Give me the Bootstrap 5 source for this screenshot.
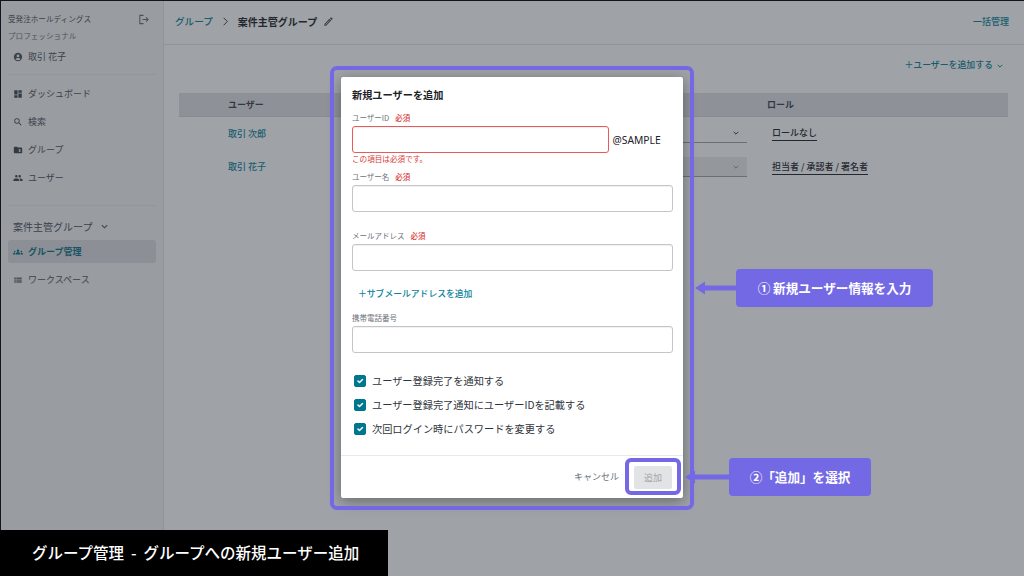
<!DOCTYPE html>
<html lang="ja">
<head>
<meta charset="utf-8">
<title>グループ管理</title>
<link href="https://cdn.jsdelivr.net/npm/bootstrap@5.3.0/dist/css/bootstrap.min.css" rel="stylesheet">
<style>
html,body{margin:0;width:1024px;height:576px;overflow:hidden}
body{position:relative;font-family:"Noto Sans CJK JP","Noto Sans",sans-serif;font-size:9px;color:#21262c;background:#fff}
svg{display:block;flex:none;fill:currentColor}
.app-frame{width:1024px;height:576px;border-top:1px solid #000;border-left:1px solid #000;display:flex}
.side-pane{width:163px;flex:none;height:100%;background:#f4f4f6;border-right:1px solid #e4e5e8;padding:0 7px;box-sizing:border-box}
.brand-row{padding-top:12px;height:24px;line-height:12px;font-size:7.6px;color:#4a4f57}
.brand-row svg{margin-right:7px;color:#646a72}
.plan-row{height:12px;line-height:12px;margin-top:5px;font-size:7.6px;color:#6e737b}
.me-row{height:16px;margin-top:7px;padding-left:5px;gap:5px;color:#4a5058}
.side-rule{border-top:1px solid #e9eaec;margin:0;opacity:1}
.rule-a{margin-top:9px;margin-bottom:5px}
.rule-b{margin-top:13px}
.side-item{height:28px;padding:0 0 0 5px;gap:5px;color:#4a5058;font-size:9px}
.side-item svg{color:#3d434b}
.side-item.is-on{height:23px;background:#dcdde1;border-radius:3px;font-weight:700;color:#086f85;margin-bottom:3px}
.side-item.is-on svg{color:#086f85}
.side-item svg.soft-icon{color:#6a6f76}
.group-title{height:20px;margin:10px 0 4px;padding-left:5px;gap:8px;font-size:10px;color:#4a5058}
.work-pane{flex:1;min-width:0}
.top-bar{height:41px;border-bottom:1px solid #e4e5e8;padding:0 15px 2px 11px;box-sizing:content-box}
.crumb-link{color:#0a8299;font-size:9.6px;font-weight:500}
.crumb-now{font-size:10px;font-weight:700;color:#1d2228}
.pencil-icon{margin-left:6px;color:#3d434b}
.bulk-link{color:#0a8299;font-weight:500;font-size:9px}
.add-row{height:48px;padding:0 20px 8px 0;color:#0a8299;font-size:8.9px;font-weight:500;gap:3px}
.add-row svg{margin-top:1px}
.user-table{margin:0 0 0 15px;width:829px;table-layout:fixed;font-size:9px;border-collapse:collapse;--bs-table-bg:transparent}
.user-table th{height:23px;padding:0;background:#e1e2e6;border-bottom:1px solid #d2d4d9;font-weight:700;color:#3a4048;vertical-align:middle}
.user-table td{padding:0;border:0;vertical-align:middle;height:34px}
.user-table .name-cell{padding-left:49px;color:#0a8299;font-weight:500}
.user-table .role-cell{padding-left:5px;font-weight:500;color:#1d2228}
.head-first{padding-left:49px!important}
.role-mark{border-bottom:1px solid #1d2228;padding-bottom:1px;display:inline-block;line-height:12px}
.pick-box{height:20px;border-bottom:1px solid #9ea2a8;margin-right:20px;padding:0 7px;color:#30353c}
.pick-box.is-off{background:#eceded;color:#8a8e94}
.dim-layer{position:absolute;inset:0;background:rgba(42,48,57,.45)}
.pop-box{position:absolute;left:341px;top:77px;width:342px;height:421px;padding:0;border:0;border-radius:2px;background:#fff;box-shadow:0 3px 14px rgba(0,0,0,.35)}
.pop-body{padding:11px 10.500px 0 11px;flex:1}
.pop-title{height:14px;line-height:14px;font-size:10.200px;font-weight:700;color:#1d2228}
.field-label{height:10px;line-height:10px;font-size:7.5px;color:#6c7178;margin:0;display:flex;gap:6px}
.field-label b{font-weight:500;color:#d93a3a}
.gap-11{margin-top:11px}.gap-8{margin-top:8px}.gap-19{margin-top:19px}.gap-12{margin-top:12px}
.text-box.form-control{height:27px;min-height:0;margin-top:3px;padding:0 8px;border:1px solid #c3c5c9;border-radius:3px;font-size:10px;box-shadow:inset 0 1px 1px rgba(0,0,0,.06)}
.text-box.form-control.is-invalid{border-color:#e75b5b;background-image:none;padding:0 8px}
.id-row{gap:5px}
.id-row .text-box{width:256.500px;flex:none}
.id-suffix{font-size:10.300px;color:#1d2228;margin-top:5px;font-family:"Noto Sans",sans-serif;margin-left:-1px}
.err-line{height:10px;line-height:10px;margin-top:1px;font-size:7.6px;color:#d93a3a}
.sub-link{height:14px;line-height:14px;margin-top:16px;padding-left:6px;font-size:8.8px;font-weight:500;color:#0a8299}
.tick-list{margin-top:21px;padding-left:2px}
.tick-row.form-check{height:14px;min-height:0;margin:0 0 10px;padding:0;display:flex;align-items:center;gap:6px}
.tick-row .form-check-input{float:none;margin:0;width:12px;height:12px;border-radius:2px;background-color:#00768f;border-color:#00768f;opacity:1}
.tick-row .form-check-label{font-size:10.200px;line-height:14px;color:#30353c;opacity:1}
.pop-foot.modal-footer{height:43px;padding:0 11px 0 0;border-top:1px solid #e7e8ea;gap:15px;flex:none;flex-wrap:nowrap}
.pop-foot.modal-footer>*{margin:0}
.cancel-btn{font-size:9px;color:#6c7178}
.add-btn.btn{width:38px;height:23px;padding:0;font-size:9px;line-height:23px;border:0;border-radius:2px;background:#e2e3e5;color:#a3a6ab;opacity:1}
.mark-frame{position:absolute;border:4px solid #7568e6;background:transparent}
.frame-big{left:330px;top:66px;width:364px;height:444px;border-radius:7px}
.frame-small{left:625px;top:458px;width:56px;height:37px;border-radius:6px}
.note-group{position:absolute;display:flex;align-items:center;color:#7568e6}
.note-one{left:695px;top:269px}
.note-two{left:685px;top:458px}
.note-box{height:38px;border-radius:4px;background:#7469e4;color:#fff;font-size:12.600px;font-weight:700;display:flex;align-items:center;justify-content:center}
.note-one .note-box{width:197px}
.note-two .note-box{width:142px}
.caption-bar{position:absolute;left:0;top:530px;width:388px;height:46px;background:#000;color:#fff;font-size:15.500px;font-weight:500;padding-left:32px;display:flex;align-items:center;white-space:pre}
</style>
</head>
<body>
<svg width="0" height="0" style="position:absolute">
  <symbol id="i-user" viewBox="0 0 24 24"><path d="M12 2a10 10 0 1 0 0 20 10 10 0 0 0 0-20zm0 4a3.4 3.4 0 1 1 0 6.8A3.4 3.4 0 0 1 12 6zm0 14a7.9 7.9 0 0 1-6.2-3c.6-1.9 4.2-2.8 6.2-2.8s5.600.9 6.200 2.800A7.900 7.900 0 0 1 12 20z"/></symbol>
  <symbol id="i-dash" viewBox="0 0 24 24"><path d="M3 13h8V3H3v10zm0 8h8v-6H3v6zm10 0h8V11h-8v10zm0-18v6h8V3h-8z"/></symbol>
  <symbol id="i-search" viewBox="0 0 24 24"><path d="M15.500 14h-.79l-.28-.27A6.471 6.471 0 0 0 16 9.500 6.500 6.500 0 1 0 9.500 16c1.610 0 3.090-.59 4.230-1.570l.27.28v.79l5 4.990L20.490 19l-4.990-5zm-6 0C7.010 14 5 11.990 5 9.500S7.010 5 9.500 5 14 7.010 14 9.500 11.990 14 9.500 14z"/></symbol>
  <symbol id="i-folder" viewBox="0 0 24 24"><path fill-rule="evenodd" d="M10 4H4a2 2 0 0 0-2 2v12c0 1.100.9 2 2 2h16a2 2 0 0 0 2-2V8a2 2 0 0 0-2-2h-8l-2-2zm4 6h4v1.800h-2.400v.9H18V17h-4v-1.800h2.400v-.9H14V10z"/></symbol>
  <symbol id="i-people" viewBox="0 0 24 24"><path d="M16 11a3 3 0 1 0 0-6 3 3 0 0 0 0 6zm-8 0a3 3 0 1 0 0-6 3 3 0 0 0 0 6zm0 2c-2.330 0-7 1.170-7 3.500V19h14v-2.500c0-2.330-4.670-3.500-7-3.500zm8 0c-.29 0-.62.02-.97.05 1.160.84 1.970 1.970 1.970 3.450V19h6v-2.500c0-2.330-4.670-3.500-7-3.500z"/></symbol>
  <symbol id="i-groups" viewBox="0 0 24 24"><path d="M12 12.800c1.600 0 3.100.4 4.300.9.900.4 1.700 1.200 1.700 2.300V18H6v-2c0-1.100.7-1.900 1.700-2.300 1.200-.5 2.700-.9 4.300-.9zM4 13a2 2 0 1 0 0-4 2 2 0 0 0 0 4zm1.100 1.100A6.900 6.900 0 0 0 4 14c-1 0-1.900.2-2.800.6A2 2 0 0 0 0 16.400V18h4.500v-2c0-.7.200-1.300.6-1.900zM20 13a2 2 0 1 0 0-4 2 2 0 0 0 0 4zm4 3.400a2 2 0 0 0-1.200-1.800 7 7 0 0 0-3.900-.5c.4.600.6 1.200.6 1.900v2H24v-1.600zM12 6a3 3 0 1 1 0 6 3 3 0 0 1 0-6z"/></symbol>
  <symbol id="i-list" viewBox="0 0 24 24"><path d="M3 6h4v3.500H3zM3 10.500h4V14H3zM3 15h4v3.500H3zM8 6h13v3.500H8zM8 10.500h13V14H8zM8 15h13v3.500H8z"/></symbol>
  <symbol id="i-pencil" viewBox="0 0 24 24"><path d="M14.060 9.020l.92.92L5.920 19H5v-.92l9.060-9.060M17.660 3c-.25 0-.51.1-.7.29l-1.830 1.830 3.750 3.750 1.830-1.830a.996.996 0 0 0 0-1.410l-2.340-2.340c-.2-.2-.45-.29-.71-.29zm-3.600 3.190L3 17.250V21h3.750L17.810 9.940l-3.750-3.750z"/></symbol>
  <symbol id="i-exit" viewBox="0 0 24 24"><path fill="none" stroke="currentColor" stroke-width="2.200" d="M12 3H4v18h8M10 12h12M17.500 7.500 22 12l-4.500 4.500"/></symbol>
  <symbol id="i-down" viewBox="0 0 24 24"><path fill="none" stroke="currentColor" stroke-width="3" d="M5 8.500 12 15.500 19 8.500"/></symbol>
  <symbol id="i-next" viewBox="0 0 24 24"><path fill="none" stroke="currentColor" stroke-width="2.400" d="M7 2 17 12 7 22"/></symbol>
</svg>

<div class="app-frame">
  <aside class="side-pane">
    <div class="brand-row d-flex justify-content-between align-items-center">
      <span>受発注ホールディングス</span>
      <svg width="11" height="11"><use href="#i-exit"/></svg>
    </div>
    <div class="plan-row">プロフェッショナル</div>
    <div class="me-row d-flex align-items-center">
      <svg width="10" height="10"><use href="#i-user"/></svg><span>取引 花子</span>
    </div>
    <hr class="side-rule rule-a">
    <nav class="nav flex-column">
      <a class="side-item d-flex align-items-center text-decoration-none"><svg width="10" height="10"><use href="#i-dash"/></svg>ダッシュボード</a>
      <a class="side-item d-flex align-items-center text-decoration-none"><svg width="10" height="10"><use href="#i-search"/></svg>検索</a>
      <a class="side-item d-flex align-items-center text-decoration-none"><svg width="10" height="10"><use href="#i-folder"/></svg>グループ</a>
      <a class="side-item d-flex align-items-center text-decoration-none"><svg width="10" height="10"><use href="#i-people"/></svg>ユーザー</a>
    </nav>
    <hr class="side-rule rule-b">
    <div class="group-title d-flex align-items-center">案件主管グループ<svg width="9" height="9"><use href="#i-down"/></svg></div>
    <nav class="nav flex-column">
      <a class="side-item is-on d-flex align-items-center text-decoration-none"><svg width="10" height="10"><use href="#i-groups"/></svg>グループ管理</a>
      <a class="side-item d-flex align-items-center text-decoration-none"><svg class="soft-icon" width="10" height="10"><use href="#i-list"/></svg>ワークスペース</a>
    </nav>
  </aside>
  <main class="work-pane">
    <header class="top-bar d-flex align-items-center justify-content-between">
      <div class="d-flex align-items-center">
        <span class="crumb-link">グループ</span>
        <svg class="mx-2" width="9" height="9"><use href="#i-next"/></svg>
        <span class="crumb-now">案件主管グループ</span>
        <svg class="pencil-icon" width="11" height="11"><use href="#i-pencil"/></svg>
      </div>
      <span class="bulk-link">一括管理</span>
    </header>
    <div class="add-row d-flex align-items-center justify-content-end">＋ユーザーを追加する<svg width="8" height="8"><use href="#i-down"/></svg></div>
    <table class="table user-table">
      <colgroup><col style="width:320px"><col style="width:268px"><col></colgroup>
      <thead><tr><th class="head-first">ユーザー</th><th></th><th>ロール</th></tr></thead>
      <tbody>
        <tr><td class="name-cell">取引 次郎</td><td><div class="pick-box d-flex align-items-center justify-content-end"><svg width="8" height="8"><use href="#i-down"/></svg></div></td><td class="role-cell"><span class="role-mark">ロールなし</span></td></tr>
        <tr><td class="name-cell">取引 花子</td><td><div class="pick-box is-off d-flex align-items-center justify-content-end"><svg width="8" height="8"><use href="#i-down"/></svg></div></td><td class="role-cell"><span class="role-mark">担当者 / 承認者 / 署名者</span></td></tr>
      </tbody>
    </table>
  </main>
</div>

<div class="dim-layer"></div>
<div class="modal-content pop-box d-flex flex-column">
  <div class="pop-body modal-body">
    <div class="pop-title">新規ユーザーを追加</div>
    <label class="field-label gap-11">ユーザーID<b>必須</b></label>
    <div class="id-row d-flex align-items-center"><input class="form-control text-box is-invalid" type="text"><span class="id-suffix">@SAMPLE</span></div>
    <div class="err-line">この項目は必須です。</div>
    <label class="field-label gap-8">ユーザー名<b>必須</b></label>
    <input class="form-control text-box" type="text">
    <label class="field-label gap-19">メールアドレス<b>必須</b></label>
    <input class="form-control text-box" type="text">
    <div class="sub-link">＋サブメールアドレスを追加</div>
    <label class="field-label gap-12">携帯電話番号</label>
    <input class="form-control text-box" type="text">
    <div class="tick-list">
      <div class="form-check tick-row"><input class="form-check-input" type="checkbox" checked id="c1"><label class="form-check-label" for="c1">ユーザー登録完了を通知する</label></div>
      <div class="form-check tick-row"><input class="form-check-input" type="checkbox" checked id="c2"><label class="form-check-label" for="c2">ユーザー登録完了通知にユーザーIDを記載する</label></div>
      <div class="form-check tick-row"><input class="form-check-input" type="checkbox" checked id="c3"><label class="form-check-label" for="c3">次回ログイン時にパスワードを変更する</label></div>
    </div>
  </div>
  <div class="modal-footer pop-foot d-flex align-items-center justify-content-end">
    <span class="cancel-btn">キャンセル</span>
    <button class="btn add-btn" type="button" disabled>追加</button>
  </div>
</div>
<div class="mark-frame frame-big"></div>
<div class="mark-frame frame-small"></div>
<div class="note-group note-one">
  <svg width="41" height="14" viewBox="0 0 41 14"><path d="M0 7 10 0.500V4.500H41V9.500H10V13.500z"/></svg>
  <div class="note-box">① 新規ユーザー情報を入力</div>
</div>
<div class="note-group note-two">
  <svg width="44" height="14" viewBox="0 0 44 14"><path d="M0 7 10 0.500V4.500H44V9.500H10V13.500z"/></svg>
  <div class="note-box">②「追加」を選択</div>
</div>
<div class="caption-bar">グループ管理  -  グループへの新規ユーザー追加</div>
<script src="https://cdn.jsdelivr.net/npm/bootstrap@5.3.0/dist/js/bootstrap.bundle.min.js"></script>
</body>
</html>
